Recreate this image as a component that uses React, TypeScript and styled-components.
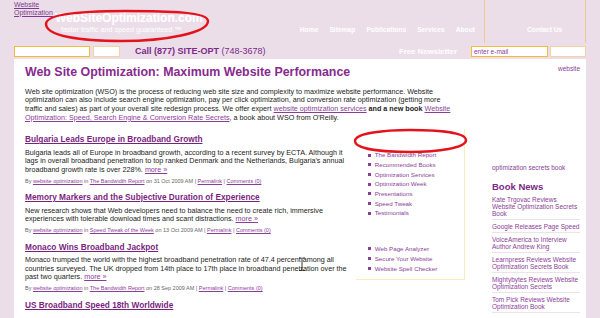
import React from 'react';
import styled, { createGlobalStyle } from 'styled-components';

const GlobalStyle = createGlobalStyle`
  html, body {
    margin: 0;
    padding: 0;
  }
  body {
    background: #ecdee9;
    font-family: "Liberation Sans", Arial, sans-serif;
    width: 600px;
    height: 318px;
    overflow: hidden;
  }
  a {
    color: #8a3d97;
  }
`;

const Page = styled.div`
  position: relative;
  display: flex;
  flex-direction: column;
  height: 318px;
  padding: 0 14px;
  box-sizing: border-box;
  overflow: hidden;
`;

const TopRow = styled.div`
  display: flex;
  height: 44px;
`;

const HomeLink = styled.a`
  width: 41px;
  padding-top: 1px;
  font-size: 7px;
  line-height: 7.6px;
  color: #7d3a8e;
`;

const Logo = styled.div`
  flex: 1;
  padding-top: 11px;
  color: #fff;
`;

const LogoName = styled.div`
  font-size: 12px;
  font-weight: bold;
  line-height: 15px;
`;

const Tagline = styled.div`
  padding-left: 6px;
  font-size: 7.2px;
  line-height: 8px;
`;

const Nav = styled.ul`
  display: flex;
  align-items: flex-end;
  gap: 11px;
  margin: 0 9px 0 0;
  padding: 0 0 9px;
  list-style: none;
`;

const NavItem = styled.li`
  font-size: 6.7px;
  font-weight: bold;
  line-height: 8px;
  color: #fff;
`;

const ContactCell = styled.div`
  display: flex;
  align-items: flex-end;
  width: 102px;
  height: 43px;
  padding: 0 0 9px 42px;
  box-sizing: border-box;
  border-left: 1px solid #efc991;
  border-right: 1px solid #efc991;
  font-size: 6.7px;
  font-weight: bold;
  line-height: 8px;
  color: #fff;
`;

const BarRow = styled.div`
  display: flex;
  align-items: center;
  height: 21px;
`;

const Field = styled.input<{ $w: number; $soft?: boolean }>`
  width: ${(p) => p.$w}px;
  height: 11px;
  margin: 0 0 0 ${(p) => (p.$soft ? 2 : 0)}px;
  padding: 0 2px;
  box-sizing: border-box;
  border: 1px solid ${(p) => (p.$soft ? '#f3d39e' : '#f1bd38')};
  background: #fff;
  font-family: "Liberation Sans", Arial, sans-serif;
  font-size: 6.5px;
  color: #8a3d97;
  outline: none;
`;

const Phone = styled.div`
  margin-left: 15px;
  font-size: 9px;
  font-weight: bold;
  color: #7b2a88;

  span {
    font-weight: normal;
  }
`;

const Spacer = styled.div`
  flex: 1;
`;

const NewsletterLabel = styled.div`
  margin-right: 14px;
  font-size: 7.8px;
  font-weight: bold;
  color: #fff;
`;

const Panel = styled.div`
  flex: 1;
  display: flex;
  padding: 6px 6px 0 11px;
  background: #fff;
`;

const MainCol = styled.div`
  width: 440px;
`;

const Title = styled.h1`
  margin: 0;
  font-size: 12.4px;
  line-height: 14px;
  color: #882a8d;
`;

const Intro = styled.p`
  margin: 8.5px -8px 0 0;
  font-size: 7.2px;
  line-height: 8.6px;
  color: #222;
`;

const ContentRow = styled.div`
  display: flex;
  align-items: flex-start;
  margin-top: 7px;
`;

const Posts = styled.div`
  width: 336px;
  padding-top: 5px;
`;

const Post = styled.div`
  margin-bottom: 8.5px;
`;

const PostTitle = styled.a`
  display: block;
  margin-bottom: 4.7px;
  font-size: 8.3px;
  font-weight: bold;
  line-height: 10px;
  color: #7a1f80;
`;

const PostBody = styled.div`
  font-size: 7.2px;
  line-height: 8.6px;
  color: #222;
`;

const Meta = styled.div`
  margin-top: 3px;
  font-size: 5.5px;
  line-height: 6px;
  color: #666;
`;

const LinkBox = styled.div`
  width: 99px;
  margin-left: 4px;
  padding: 21px 0 6px 12px;
  border-right: 1px solid #f8ebc0;
  border-bottom: 1px solid #f8ebc0;
`;

const LinkList = styled.ul<{ $gap?: number }>`
  margin: ${(p) => p.$gap || 0}px 0 0;
  padding: 0;
  list-style: none;
`;

const LinkItem = styled.li`
  display: flex;
  align-items: center;
  font-size: 6.2px;
  line-height: 9.7px;
  color: #8a3d97;

  &::before {
    content: '';
    width: 3px;
    height: 3px;
    margin-right: 4px;
    background: #8a3d97;
  }
`;

const SideCol = styled.div`
  width: 88px;
  margin-left: 27px;
  font-size: 6.5px;
  color: #8a3d97;
`;

const BookAlt = styled.div`
  height: 107px;
  line-height: 8px;

  div:first-child {
    text-align: right;
  }
  div:last-child {
    margin-top: 91px;
  }
`;

const SideHeading = styled.h3`
  margin: 9px 0 0;
  font-size: 9.5px;
  line-height: 12px;
  color: #7a2a85;
`;

const NewsItem = styled.div`
  padding: 3px 0 2px;
  border-bottom: 1px solid #ece2ea;
  line-height: 7px;
  color: #8a3d97;
`;

const Overlay = styled.svg`
  position: absolute;
  top: 0;
  left: 0;
  pointer-events: none;
`;

const posts = [
  {
    title: 'Bulgaria Leads Europe in Broadband Growth',
    body: "Bulgaria leads all of Europe in broadband growth, according to a recent survey by ECTA. Although it lags in overall broadband penetration to top ranked Denmark and the Netherlands, Bulgaria's annual broadband growth rate is over 228%.",
    cat: 'The Bandwidth Report',
    date: '31 Oct 2009',
  },
  {
    title: 'Memory Markers and the Subjective Duration of Experience',
    body: 'New research shows that Web developers need to balance the need to create rich, immersive experiences with tolerable download times and scant distractions.',
    cat: 'Speed Tweak of the Week',
    date: '13 Oct 2009',
  },
  {
    title: 'Monaco Wins Broadband Jackpot',
    body: 'Monaco trumped the world with the highest broadband penetration rate of 47.4 percent among all countries surveyed. The UK dropped from 14th place to 17th place in broadband penetration over the past two quarters.',
    cat: 'The Bandwidth Report',
    date: '28 Sep 2009',
  },
  {
    title: 'US Broadband Speed 18th Worldwide',
    body: '',
    cat: '',
    date: '',
  },
];

const news = [
  'Kate Trgovac Reviews Website Optimization Secrets Book',
  'Google Releases Page Speed',
  'VoiceAmerica to Interview Author Andrew King',
  'Learnpress Reviews Website Optimization Secrets Book',
  'Mightybytes Reviews Website Optimization Secrets',
  'Tom Pick Reviews Website Optimization Book',
];

export default function App() {
  return (
    <Page>
      <GlobalStyle />
      <TopRow>
        <HomeLink href="#">Website Optimization</HomeLink>
        <Logo>
          <LogoName>WebSiteOptimization.com</LogoName>
          <Tagline>faster traffic and speed guaranteed ™</Tagline>
        </Logo>
        <Nav>
          <NavItem>Home</NavItem>
          <NavItem>Sitemap</NavItem>
          <NavItem>Publications</NavItem>
          <NavItem>Services</NavItem>
          <NavItem>About</NavItem>
        </Nav>
        <ContactCell>Contact Us</ContactCell>
      </TopRow>

      <BarRow>
        <Field $w={76} readOnly />
        <Field $w={27} $soft readOnly style={{ marginLeft: 3 }} />
        <Phone>
          Call (877) SITE-OPT <span>(748-3678)</span>
        </Phone>
        <Spacer />
        <NewsletterLabel>Free Newsletter</NewsletterLabel>
        <Field $w={77} defaultValue="enter e-mail" />
        <Field $w={36} $soft readOnly />
      </BarRow>

      <Panel>
        <MainCol>
          <Title>Web Site Optimization: Maximum Website Performance</Title>
          <Intro>
            Web site optimization (WSO) is the process of reducing web site size and complexity to
            maximize website performance. Website optimization can also include search engine
            optimization, pay per click optimization, and conversion rate optimization (getting more
            <br />
            traffic and sales) as part of your overall site redesign process. We offer expert{' '}
            <a href="#">website optimization services</a> <b>and a new book</b>{' '}
            <a href="#">Website Optimization: Speed, Search Engine &amp; Conversion Rate Secrets</a>, a
            book about WSO from O'Reilly.
          </Intro>
          <ContentRow>
            <Posts>
              {posts.map((p) => (
                <Post key={p.title}>
                  <PostTitle href="#">{p.title}</PostTitle>
                  {p.body && (
                    <>
                      <PostBody>
                        {p.body} <a href="#">more »</a>
                      </PostBody>
                      <Meta>
                        By <a href="#">website optimization</a> in <a href="#">{p.cat}</a> on{' '}
                        {p.date} AM | <a href="#">Permalink</a> | <a href="#">Comments (0)</a>
                      </Meta>
                    </>
                  )}
                </Post>
              ))}
            </Posts>
            <LinkBox>
              <LinkList>
                <LinkItem>The Bandwidth Report</LinkItem>
                <LinkItem>Recommended Books</LinkItem>
                <LinkItem>Optimization Services</LinkItem>
                <LinkItem>Optimization Week</LinkItem>
                <LinkItem>Presentations</LinkItem>
                <LinkItem>Speed Tweak</LinkItem>
                <LinkItem>Testimonials</LinkItem>
              </LinkList>
              <LinkList $gap={26}>
                <LinkItem>Web Page Analyzer</LinkItem>
                <LinkItem>Secure Your Website</LinkItem>
                <LinkItem>Website Spell Checker</LinkItem>
              </LinkList>
            </LinkBox>
          </ContentRow>
        </MainCol>

        <SideCol>
          <BookAlt>
            <div>website</div>
            <div>optimization secrets book</div>
          </BookAlt>
          <SideHeading>Book News</SideHeading>
          {news.map((n) => (
            <NewsItem key={n}>{n}</NewsItem>
          ))}
        </SideCol>
      </Panel>

      <Overlay width="600" height="318" viewBox="0 0 600 318">
        <path
          d="M46 24C46 13 88 11 125 11C170 11 208 12 208 21C208 33 165 41 122 41C80 41 46 36 46 24Z"
          fill="none"
          stroke="#e4131b"
          strokeWidth="2.5"
        />
        <path
          d="M355 141C355 133 385 130 410 130C440 130 466 133 466 140C466 148 438 152 410 152C382 152 355 149 355 141Z"
          fill="none"
          stroke="#e4131b"
          strokeWidth="2.5"
        />
        <path
          d="M299 258h2.5l0.5 0.6 0.5-0.6h2.5M302 259v11M299 270.5h2.5l0.5-0.6 0.5 0.6h2.5"
          fill="none"
          stroke="#222"
          strokeWidth="0.9"
        />
      </Overlay>
    </Page>
  );
}
